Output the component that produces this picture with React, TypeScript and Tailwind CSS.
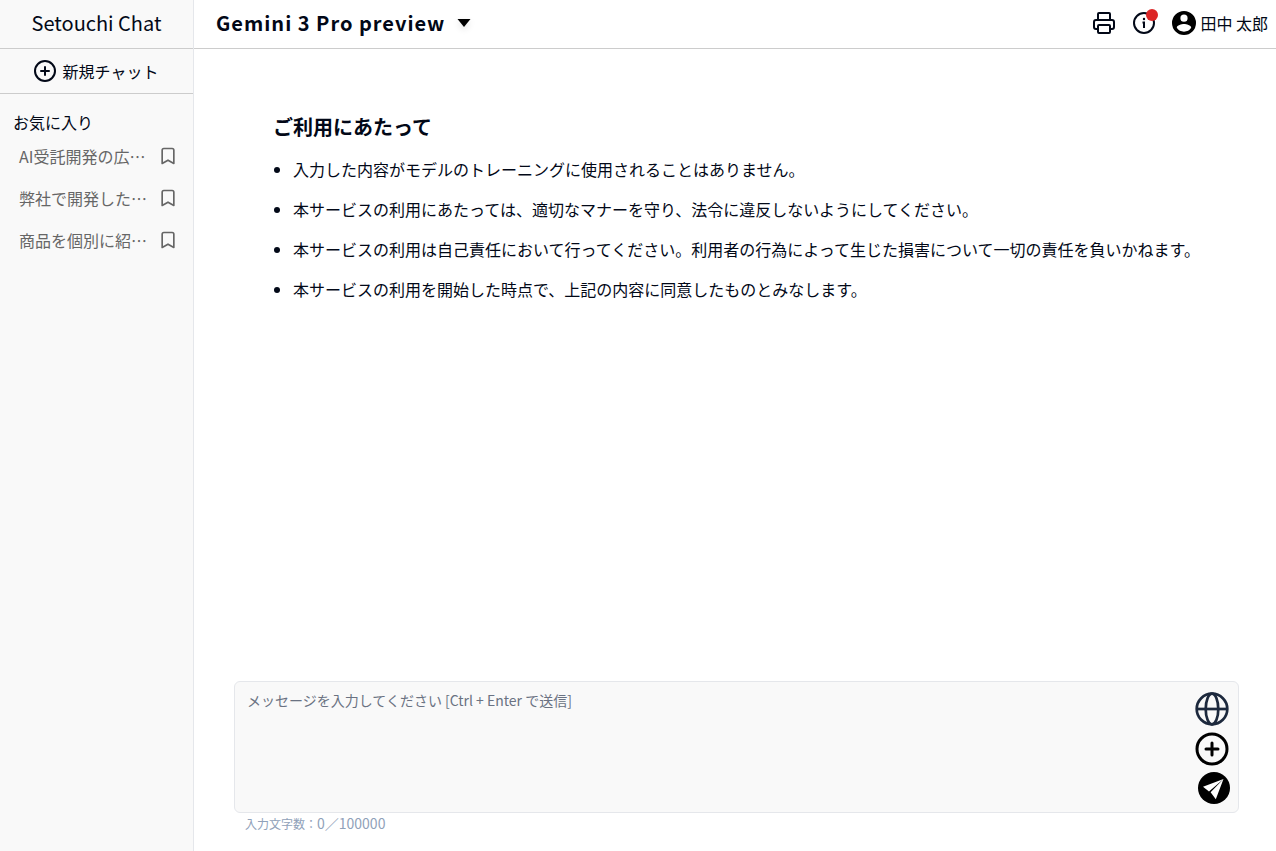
import { Bookmark, CirclePlus, Printer } from "lucide-react";

const FAVORITES = ["AI受託開発の広…", "弊社で開発した…", "商品を個別に紹…"];

const NOTICES = [
  "入力した内容がモデルのトレーニングに使用されることはありません。",
  "本サービスの利用にあたっては、適切なマナーを守り、法令に違反しないようにしてください。",
  "本サービスの利用は自己責任において行ってください。利用者の行為によって生じた損害について一切の責任を負いかねます。",
  "本サービスの利用を開始した時点で、上記の内容に同意したものとみなします。",
];

export default function App() {
  return (
    <div className="flex min-h-screen bg-white font-['Noto_Sans_CJK_JP',sans-serif] text-[#020817]">
      <Sidebar />
      <div className="flex min-w-0 flex-1 flex-col">
        <Header />
        <main className="flex flex-1 flex-col pl-10 pr-[37px]">
          <section className="flex-1 pl-[39px] pt-16">
            <h2 className="text-xl font-bold leading-7">ご利用にあたって</h2>
            <ul className="mt-4 list-disc space-y-4 pl-5">
              {NOTICES.map((notice) => (
                <li key={notice}>{notice}</li>
              ))}
            </ul>
          </section>
          <Composer />
        </main>
      </div>
    </div>
  );
}

function Sidebar() {
  return (
    <aside className="w-[194px] shrink-0 border-r border-gray-200 bg-[#f9f9f9]">
      <h1 className="flex h-[49px] items-center justify-center border-b border-[#ccc] pb-0.5 text-xl">
        Setouchi Chat
      </h1>
      <button className="flex h-[45px] w-full items-center justify-center gap-1.5 border-b border-[#ccc] pr-0.5">
        <CirclePlus size={24} aria-hidden />
        新規チャット
      </button>
      <h2 className="mt-4 px-[13px]">お気に入り</h2>
      <ul className="mt-px">
        {FAVORITES.map((title) => (
          <li
            key={title}
            className="flex h-[42px] items-center justify-between pl-[19px] pr-[15px] text-[#666]"
          >
            <a href="#" className="whitespace-nowrap">
              {title}
            </a>
            <button aria-label="お気に入りから外す">
              <Bookmark size={20} aria-hidden />
            </button>
          </li>
        ))}
      </ul>
    </aside>
  );
}

function Header() {
  return (
    <header className="flex h-[49px] items-center justify-between border-b border-[#ccc] pb-0.5 pl-[22px] pr-2">
      <button className="flex items-center gap-3 text-xl font-bold tracking-wider">
        Gemini 3 Pro preview
        <svg width="14" height="8" viewBox="0 0 14 8" className="drop-shadow-md" aria-hidden>
          <path d="M.5 0h13L7 8z" fill="#000" />
        </svg>
      </button>
      <div className="flex items-center gap-4">
        <button aria-label="印刷">
          <Printer size={24} aria-hidden />
        </button>
        <button aria-label="お知らせ" className="relative">
          <InfoIcon />
          <span className="absolute -right-0.5 -top-0.5 size-3 rounded-full bg-[#dc2626]" />
        </button>
        <button className="flex items-center gap-1">
          <UserIcon />
          田中 太郎
        </button>
      </div>
    </header>
  );
}

function Composer() {
  return (
    <form className="pb-[18px]">
      <div className="flex h-[132px] rounded-md border border-gray-200 bg-[#f9f9f9]">
        <textarea
          aria-label="メッセージ"
          placeholder="メッセージを入力してください [Ctrl + Enter で送信]"
          className="flex-1 resize-none px-3 py-2 text-sm outline-none placeholder:text-gray-500"
        />
        <div className="flex flex-col items-end gap-1 pr-2 pt-[9px]">
          <button type="button" aria-label="ウェブ検索" className="text-slate-800">
            <GlobeIcon />
          </button>
          <button type="button" aria-label="ファイルを追加" className="text-black">
            <CirclePlus size={36} aria-hidden />
          </button>
          <button type="submit" aria-label="送信" className="mt-px">
            <SendIcon />
          </button>
        </div>
      </div>
      <p className="px-[11px] text-xs text-slate-400">
        入力文字数：<span className="text-sm">0／100000</span>
      </p>
    </form>
  );
}

function InfoIcon() {
  return (
    <svg width="24" height="24" viewBox="0 0 24 24" fill="none" stroke="currentColor" aria-hidden>
      <circle cx="12" cy="12" r="10" strokeWidth="2" />
      <path d="M10.5 11.5H12V17" strokeWidth="2" />
      <circle cx="12" cy="8" r="1.2" fill="currentColor" stroke="none" />
    </svg>
  );
}

function UserIcon() {
  return (
    <svg width="24" height="24" viewBox="2 2 20 20" fill="#000" aria-hidden>
      <path d="M12 2a10 10 0 1 0 0 20 10 10 0 0 0 0-20zm0 3a3 3 0 1 1 0 6 3 3 0 0 1 0-6zm0 14.2a7.2 7.2 0 0 1-6-3.22c.03-1.99 4-3.08 6-3.08s5.97 1.09 6 3.08a7.2 7.2 0 0 1-6 3.22z" />
    </svg>
  );
}

function GlobeIcon() {
  return (
    <svg
      width="36"
      height="36"
      viewBox="0 0 24 24"
      fill="none"
      stroke="currentColor"
      strokeWidth="1.8"
      aria-hidden
    >
      <circle cx="12" cy="12" r="10.2" />
      <ellipse cx="12" cy="12" rx="4.2" ry="10.2" />
      <path d="M2 12h20" />
    </svg>
  );
}

function SendIcon() {
  return (
    <svg width="32" height="32" viewBox="0 0 32 32" aria-hidden>
      <circle cx="16" cy="16" r="16" fill="#000" />
      <path d="M25.5 7 5 14.7l6 4.8zM25.5 7 12.6 20.3l5.2 7z" fill="#fff" />
    </svg>
  );
}
